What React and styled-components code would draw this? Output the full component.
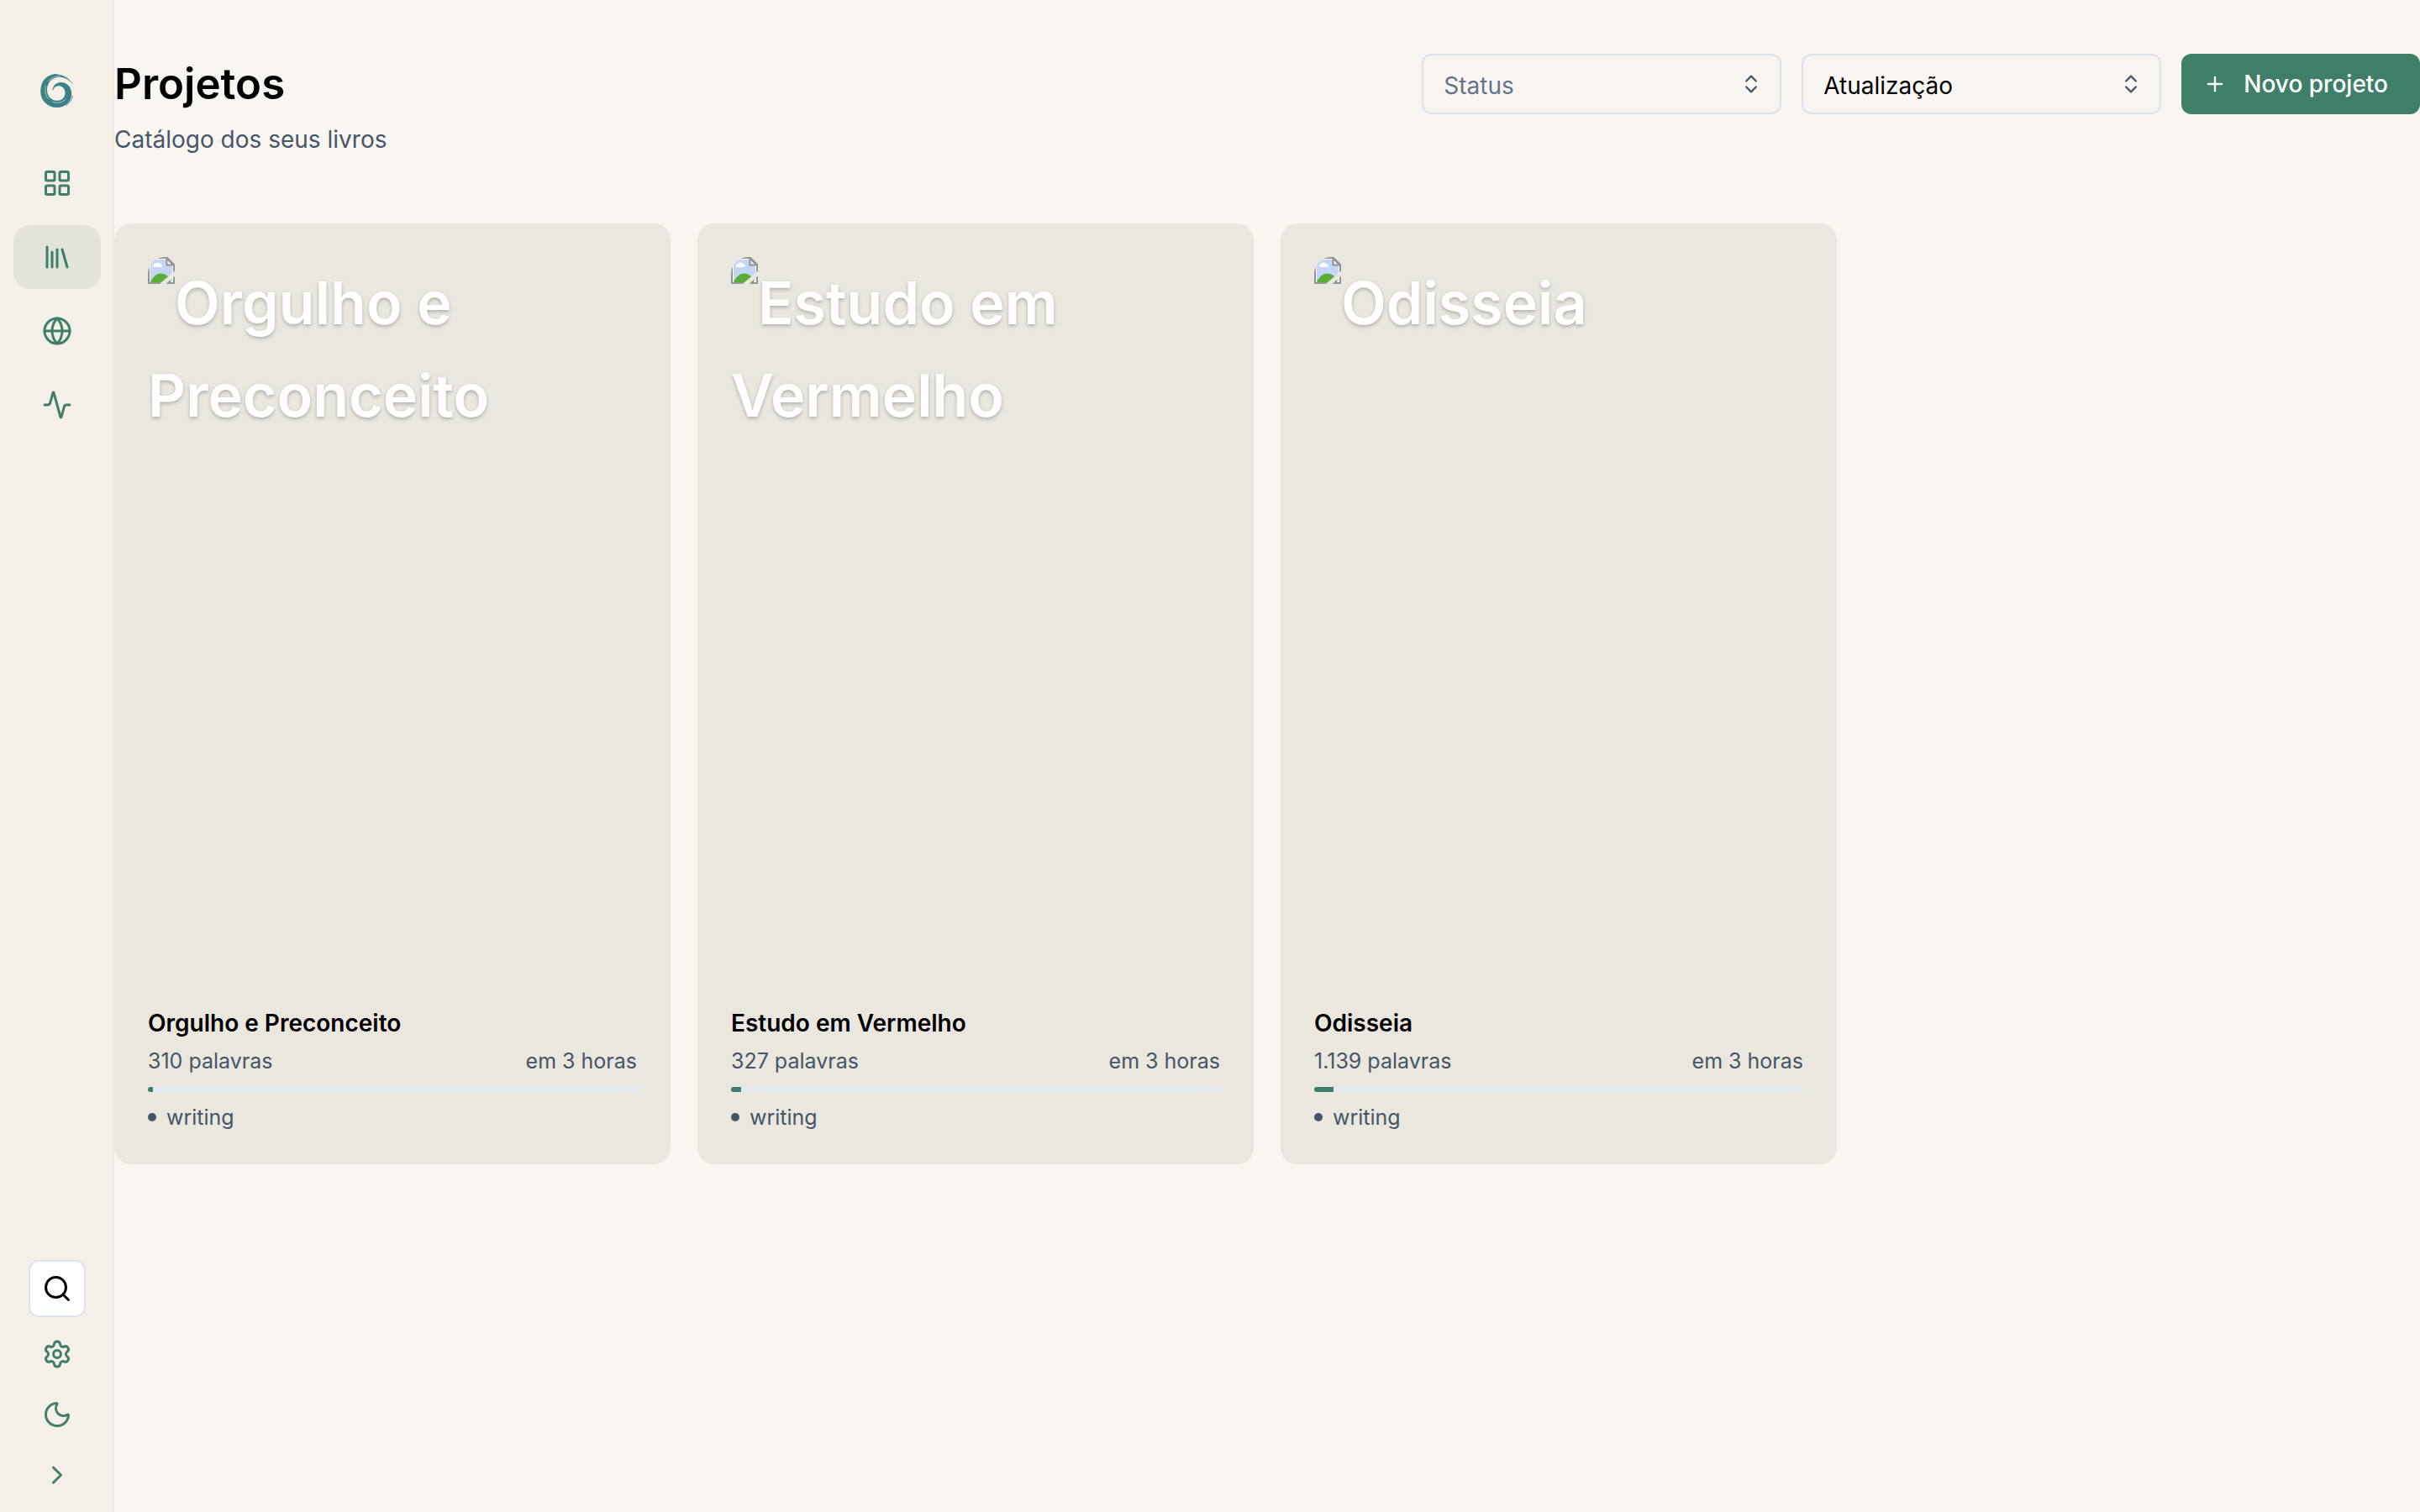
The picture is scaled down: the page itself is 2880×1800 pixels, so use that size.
import React, { useState } from 'react'
import styled, { createGlobalStyle } from 'styled-components'
import {
    Activity,
    ChevronRight,
    ChevronsUpDown,
    Globe,
    LayoutGrid,
    Library,
    Moon,
    Plus,
    Search,
    Settings
} from 'lucide-react'

const projects = [
    { id: 1, title: 'Orgulho e Preconceito', words: '310 palavras', updated: 'em 3 horas', progress: 1, status: 'writing' },
    { id: 2, title: 'Estudo em Vermelho', words: '327 palavras', updated: 'em 3 horas', progress: 2, status: 'writing' },
    { id: 3, title: 'Odisseia', words: '1.139 palavras', updated: 'em 3 horas', progress: 4, status: 'writing' }
]

const navItems = [
    { label: 'Painel', icon: LayoutGrid },
    { label: 'Projetos', icon: Library, active: true },
    { label: 'Mundo', icon: Globe },
    { label: 'Atividade', icon: Activity }
]

const Logo = () => (
    <svg width="40" height="40" viewBox="0 0 40 40" fill="none" aria-hidden="true">
        <path
            fill="#3b8286"
            d="M39.6 14C36 6.500 28.500 1.200 20 .6C8.500 0 .2 9 .2 20.500C.2 32 9 40 19.500 40C30 40 38 32.500 37.200 22.500C36.600 14.500 30.500 9.800 24.500 10C18.500 10.200 14.200 14.500 14.500 20.800C16 15.500 19.500 13.600 23 14.300C27.500 15.200 29.800 19 29.500 23C29 29.200 24.500 32 19.500 31.800C12.500 31.500 8 26 8 19C8 10 14.500 3.800 22.500 3.700C29.500 3.700 35.500 7.500 39.600 14Z"
        />
        <path stroke="#3b8286" strokeWidth=".8" d="M2.500 10.500C5.500 4.500 12 .3 20 .4M38.500 26C37.500 31 34.500 35.500 30 37.800" />
        <path stroke="#f4efe7" strokeWidth=".6" d="M6.500 14C5 19.500 6 26 10 30M14.500 33C20 35.500 27 34 30.500 29.500M9 9C12.500 5 18 2.400 24 2.700" />
    </svg>
)

const BrokenImage = () => (
    <BrokenIcon viewBox="0 0 16 16" aria-hidden="true">
        <path fill="#fff" d="M.5.5h11L15.500 4.500v11H.5z" />
        <path fill="#c4d6f5" d="M1.500 1.500h9.500v3.500h3.500v9.500h-13z" />
        <path fill="#fff" d="M3 6a1.200 1.200 0 0 1 1-1.700 1.800 1.800 0 0 1 3.200-.2A1.300 1.300 0 0 1 8.300 6z" />
        <path fill="#5aae36" d="M1.500 15C3 11.800 5 9.700 7.600 9.700s4.400 1.500 5.900 3.300v2z" />
        <path fill="none" stroke="#939393" d="M.5 15.500V.5h11L15.500 4.500v11z" />
        <path fill="#f2f2f2" stroke="#939393" d="M11.200.8v4h4z" />
        <path fill="#e9e7de" d="M16 8.200v3.200L10.800 16H6.900z" />
    </BrokenIcon>
)

const ProjectCard = ({ project }) => (
    <Card>
        <Cover>
            <BrokenImage/>
            {project.title}
        </Cover>
        <CardTitle>{project.title}</CardTitle>
        <CardMeta>
            <span>{project.words}</span>
            <span>{project.updated}</span>
        </CardMeta>
        <Track role="progressbar" aria-label={project.title} aria-valuenow={project.progress}>
            <Bar style={{ width: `${project.progress}%` }}/>
        </Track>
        <Status>{project.status}</Status>
    </Card>
)

const App = () => {
    const [status, setStatus] = useState('')
    const [order, setOrder] = useState('updated')

    return (
        <Page>
            <GlobalStyle/>
            <Sidebar>
                <Brand href="#" aria-label="Início"><Logo/></Brand>
                <Nav>
                    {navItems.map(({ label, icon: Icon, active }) => (
                        <NavLink key={label} href="#" aria-label={label} $active={active}>
                            <Icon size={36}/>
                        </NavLink>
                    ))}
                </Nav>
                <Tools>
                    <SearchButton aria-label="Buscar"><Search size={36}/></SearchButton>
                    <ToolButton aria-label="Configurações"><Settings size={36}/></ToolButton>
                    <ToolButton aria-label="Tema"><Moon size={36}/></ToolButton>
                    <ToolButton aria-label="Expandir"><ChevronRight size={36}/></ToolButton>
                </Tools>
            </Sidebar>
            <Main>
                <Header>
                    <div>
                        <Title>Projetos</Title>
                        <Subtitle>Catálogo dos seus livros</Subtitle>
                    </div>
                    <Actions>
                        <SelectBox>
                            <Select
                                aria-label="Status"
                                value={status}
                                $empty={!status}
                                onChange={e => setStatus(e.target.value)}
                            >
                                <option value="">Status</option>
                                <option value="writing">writing</option>
                            </Select>
                            <ChevronsUpDown size={28}/>
                        </SelectBox>
                        <SelectBox>
                            <Select aria-label="Ordenar" value={order} onChange={e => setOrder(e.target.value)}>
                                <option value="updated">Atualização</option>
                                <option value="title">Título</option>
                            </Select>
                            <ChevronsUpDown size={28}/>
                        </SelectBox>
                        <NewButton>
                            <Plus size={28}/>
                            Novo projeto
                        </NewButton>
                    </Actions>
                </Header>
                <Grid>
                    {projects.map(project => <ProjectCard key={project.id} project={project}/>)}
                </Grid>
            </Main>
        </Page>
    )
}

export default App

const GlobalStyle = createGlobalStyle`
    * {
        box-sizing: border-box;
    }
    body {
        margin: 0;
        background: #f9f6f1;
        color: #000;
        font-family: Inter, 'Liberation Sans', sans-serif;
        font-size: 28px;
    }
    h1, h2, p {
        margin: 0;
    }
    button, select {
        font: inherit;
        cursor: pointer;
    }
    svg {
        display: block;
        flex-shrink: 0;
    }
`

const Page = styled.div`
    display: flex;
    min-height: 100vh;
`

const Sidebar = styled.aside`
    position: sticky;
    top: 0;
    display: flex;
    flex-direction: column;
    flex-shrink: 0;
    width: 136px;
    height: 100vh;
    padding: 88px 14px 12px 16px;
    border-right: 2px solid #ebe8de;
    background: #f4efe7;
    color: #3f7f6a;
`

const Brand = styled.a`
    display: flex;
    justify-content: center;
`

const Nav = styled.nav`
    display: flex;
    flex-direction: column;
    gap: 12px;
    margin-top: 52px;
`

const NavLink = styled.a`
    display: flex;
    align-items: center;
    justify-content: center;
    height: 76px;
    border-radius: 20px;
    background: ${({ $active }) => $active ? '#e2e4da' : 'transparent'};
    color: inherit;
`

const Tools = styled.div`
    display: flex;
    flex-direction: column;
    align-items: center;
    gap: 8px;
    margin-top: auto;
`

const ToolButton = styled.button`
    display: flex;
    align-items: center;
    justify-content: center;
    width: 64px;
    height: 64px;
    padding: 0;
    border: none;
    border-radius: 12px;
    background: none;
    color: inherit;
`

const SearchButton = styled(ToolButton)`
    width: 68px;
    height: 68px;
    margin-bottom: 4px;
    border: 2px solid #dce3ed;
    background: #fff;
    color: #000;
`

const Main = styled.main`
    flex: 1;
    min-width: 0;
    padding-top: 64px;
`

const Header = styled.header`
    display: flex;
    align-items: flex-start;
    justify-content: space-between;
    margin-bottom: 78px;
`

const Title = styled.h1`
    font-size: 51px;
    font-weight: 600;
    line-height: 72px;
`

const Subtitle = styled.p`
    margin-top: 8px;
    color: #475569;
    line-height: 44px;
`

const Actions = styled.div`
    display: flex;
    gap: 24px;
`

const SelectBox = styled.div`
    display: grid;
    grid-template-columns: 1fr 50px;
    align-items: center;
    width: 428px;
    svg {
        grid-area: 1 / 2;
        color: #475569;
        pointer-events: none;
    }
`

const Select = styled.select`
    grid-area: 1 / 1 / 2 / 3;
    width: 100%;
    height: 72px;
    padding: 4px 64px 0 24px;
    border: 2px solid #dce3ed;
    border-radius: 12px;
    background: transparent;
    color: ${({ $empty }) => $empty ? '#64748b' : '#000'};
    appearance: none;
`

const NewButton = styled.button`
    display: flex;
    align-items: center;
    gap: 20px;
    height: 72px;
    padding: 0 38px 0 26px;
    border: none;
    border-radius: 12px;
    background: #3f7f6a;
    color: #fff;
    font-weight: 500;
`

const Grid = styled.section`
    display: grid;
    grid-template-columns: repeat(4, 1fr);
    gap: 32px;
`

const Card = styled.article`
    padding: 40px;
    border-radius: 20px;
    background: #e9e7de;
`

const Cover = styled.div`
    aspect-ratio: 2 / 3;
    overflow: hidden;
    border-radius: 20px;
    color: #fff;
    font-size: 70px;
    font-weight: 600;
    line-height: 110px;
    text-shadow: 0 2px 4px rgba(0, 0, 0, 0.25);
`

const BrokenIcon = styled.svg`
    float: left;
    width: 32px;
    height: 32px;
`

const CardTitle = styled.h2`
    margin-top: 16px;
    font-size: 28px;
    font-weight: 600;
    line-height: 46px;
`

const CardMeta = styled.div`
    display: flex;
    justify-content: space-between;
    margin-top: 6px;
    color: #475569;
    font-size: 25px;
    line-height: 32px;
`

const Track = styled.div`
    height: 6px;
    margin: 15px 0 14px;
    overflow: hidden;
    border-radius: 4px;
    background: #e2e8f0;
`

const Bar = styled.div`
    height: 100%;
    background: #3f7f6a;
`

const Status = styled.p`
    display: flex;
    align-items: center;
    gap: 12px;
    color: #475569;
    font-size: 25px;
    line-height: 32px;
    &::before {
        content: '';
        width: 10px;
        height: 10px;
        border-radius: 50%;
        background: #475569;
    }
`
